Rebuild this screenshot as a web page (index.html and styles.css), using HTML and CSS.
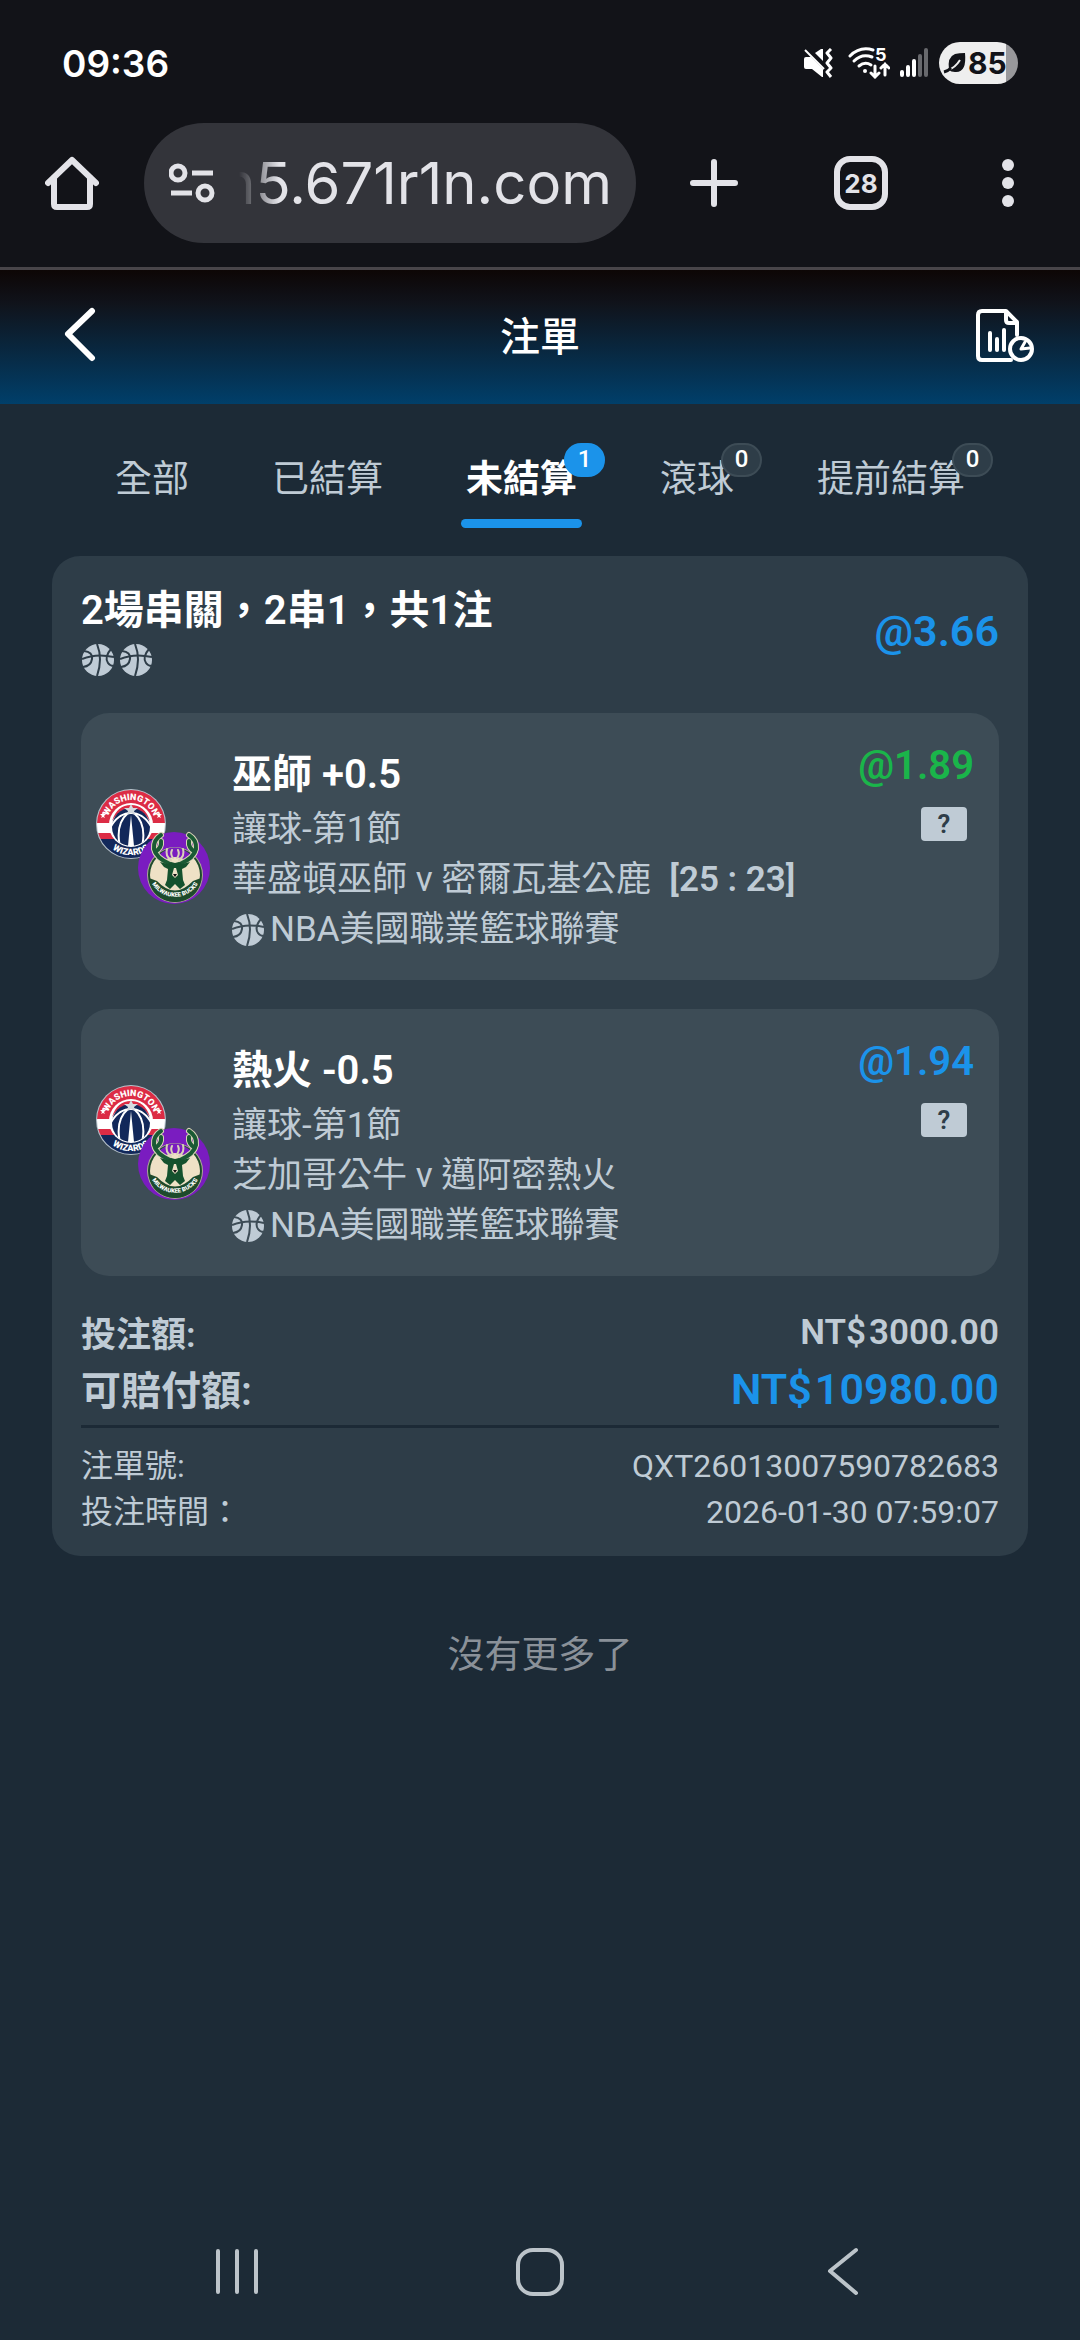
FILE: index.html
```html
<!DOCTYPE html>
<html lang="zh-Hant">
<head>
  <meta charset="UTF-8">
  <meta name="viewport" content="width=device-width, initial-scale=1.0">
  <title>注單</title>
  <link rel="stylesheet" href="styles.css">
</head>
<body>
  <svg class="sprite" width="0" height="0" aria-hidden="true">
    <defs>
      <mask id="ball-seams">
        <circle cx="16" cy="16" r="16" fill="#fff"/>
        <g fill="none" stroke="#000" stroke-width="2">
          <path d="M15 0Q21 15 15 32"/>
          <path d="M0 15Q14 9 32 13"/>
          <path d="M2 7Q11 8 10 15Q9 22 1 23"/>
          <path d="M29 5Q22 13 26 19Q28 22 32 22"/>
        </g>
      </mask>
      <clipPath id="wiz-clip"><circle cx="35" cy="36" r="34"/></clipPath>
      <clipPath id="wiz-ball"><circle cx="35" cy="38" r="20"/></clipPath>
      <path id="wiz-top" d="M11 36A24 24 0 0 1 59 36"/>
      <path id="wiz-bottom" d="M5 44A31 31 0 0 0 65 44"/>
      <path id="bucks-bottom" d="M54 92A27 27 0 0 0 104 92"/>
    </defs>
    <symbol id="ball" viewBox="0 0 32 32">
      <rect width="32" height="32" fill="currentColor" mask="url(#ball-seams)"/>
    </symbol>
    <symbol id="wizards" viewBox="0 0 116 116">
      <circle cx="35" cy="36" r="35" fill="#b9c3cc"/>
      <g clip-path="url(#wiz-clip)">
        <rect width="72" height="36" fill="#dc2c45"/>
        <rect y="35" width="72" height="10" fill="#fff"/>
        <rect y="45" width="72" height="6" fill="#dc2c45"/>
        <rect y="51" width="72" height="22" fill="#12285a"/>
      </g>
      <circle cx="35" cy="37" r="22" fill="#fff"/>
      <path d="M16 33Q21 17 35 17Q49 17 54 33Q47 21 35 21Q23 21 16 33Z" fill="#dc2c45"/>
      <circle cx="35" cy="39" r="19" fill="#12285a"/>
      <g fill="none" stroke="#fff" stroke-width="2" clip-path="url(#wiz-ball)">
        <path d="M14 40Q22 25 35 25Q48 25 56 40"/>
        <path d="M32 25Q19 36 24 59"/>
        <path d="M38 25Q51 36 46 59"/>
      </g>
      <path d="M35 27L38 58H32Z" fill="#fff"/>
      <path d="M35 16L37 20L42 20L38 23L39 27L35 25L31 27L32 23L28 20L33 20Z" fill="#d5dbe0"/>
      <path d="M7 24l1 2h2l-2 2 1 2-2-1-2 1 1-2-2-2h2zM63 24l1 2h2l-2 2 1 2-2-1-2 1 1-2-2-2h2z" fill="#fff"/>
    </symbol>
    <symbol id="bucks" viewBox="0 0 116 116">
      <circle cx="78" cy="80" r="36" fill="#7a1cc0"/>
      <circle cx="79" cy="87" r="28" fill="#a9a893"/>
      <circle cx="79" cy="87" r="27" fill="#1d4a2c"/>
      <circle cx="79" cy="87" r="25" fill="#eee1c6"/>
      <path d="M61 69Q79 50 97 69L90 72Q79 66 68 72Z" fill="#7a1cc0"/>
      <path d="M53 90L61 93Q79 112 97 93L105 90Q103 112 79 114Q55 112 53 90Z" fill="#1d4a2c"/>
      <g fill="none" stroke-linecap="round" stroke-linejoin="round">
        <g stroke="#d9d3b8" stroke-width="6">
          <path d="M74 76Q60 70 58 61Q57 52 65 47M59 64Q66 60 65 53"/>
          <path d="M84 76Q98 70 100 61Q101 52 93 47M99 64Q92 60 93 53"/>
        </g>
        <g stroke="#1a5a34" stroke-width="4">
          <path d="M74 76Q60 70 58 61Q57 52 65 47M59 64Q66 60 65 53"/>
          <path d="M84 76Q98 70 100 61Q101 52 93 47M99 64Q92 60 93 53"/>
        </g>
        <path d="M75 72Q69 68 71 61M83 72Q89 68 87 61M77 70Q74 66 76 62M81 70Q84 66 82 62" stroke="#d9d3b8" stroke-width="2"/>
      </g>
      <path d="M75 74L79 75L83 74L86 76L94 74L90 79L86 81L87 92L89 97L84 101L79 96L74 101L69 97L71 92L72 81L68 79L64 74L72 76Z" fill="#14512d"/>
      <path d="M78 80H80L82 87L79 90L76 87Z" fill="#eee1c6"/>
      <path d="M77 86H81L79 89Z" fill="#111"/>
    </symbol>
  </svg>

  <div class="status-bar">
    <time class="clock">09:36</time>
    <div class="status-icons">
      <svg width="30" height="30" viewBox="0 0 30 30">
        <path d="M1 11Q1 9 3 9H8L20 21V29H19L9 21H3Q1 21 1 19Z" fill="#fff"/>
        <path d="M12 5L18 1H20V13Z" fill="#fff"/>
        <path d="M2 2L21 21" stroke="#fff" stroke-width="2"/>
        <path d="M28 1L24 5L28 10L24 15L28 20L24 24L28 29" fill="none" stroke="#fff" stroke-width="3" stroke-linejoin="round"/>
      </svg>
      <svg class="wifi" width="42" height="32" viewBox="0 0 42 32">
        <g fill="none" stroke="#fff" stroke-width="3" stroke-linecap="round">
          <path d="M2 9Q12 -1 25 3"/>
          <path d="M6 14Q14 6 24 10"/>
          <path d="M11 19Q17 14 23 18"/>
          <path d="M27 19V30M23 26L27 30L31 26M37 28V17M33 21L37 17L41 21"/>
        </g>
        <circle cx="17" cy="24" r="2" fill="#fff"/>
        <text x="27" y="14" font-size="18">5</text>
      </svg>
      <svg class="signal" width="28" height="30" viewBox="0 0 28 30" stroke-width="4" stroke-linecap="round">
        <path d="M2 24V27M8 19V27M14 13V27" stroke="#fff"/>
        <path d="M20 8V27M26 2V27" stroke="#68696d"/>
      </svg>
      <div class="battery">
        <svg width="24" height="22" viewBox="0 0 24 22">
          <path d="M22 1Q24 21 12 20Q8 20 6 18Q4 5 12 2Q16 1 22 1Z" fill="#121318"/>
          <path d="M5 18Q12 16 17 8" fill="none" stroke="#eee" stroke-width="2"/>
          <path d="M1 20Q5 19 8 16" fill="none" stroke="#121318" stroke-width="3"/>
        </svg>
        <span>85</span>
      </div>
    </div>
  </div>

  <div class="toolbar">
    <button class="tool home" aria-label="Home">
      <svg width="54" height="54" viewBox="0 0 54 54" fill="none" stroke="#e3e3e8" stroke-width="6" stroke-linejoin="round" stroke-linecap="round">
        <path d="M3 27L27 4L51 27"/><path d="M9 22V48Q9 51 12 51H42Q45 51 45 48V22"/>
      </svg>
    </button>
    <div class="address">
      <svg width="46" height="40" viewBox="0 0 46 40" fill="none" stroke="#e3e3e8" stroke-width="5">
        <circle cx="9" cy="10" r="7"/><path d="M23 10H44M2 30H23"/><circle cx="36" cy="30" r="7"/>
      </svg>
      <input class="url" type="text" value="n5.671r1n.com" aria-label="URL">
    </div>
    <button class="tool" aria-label="New tab">
      <svg width="54" height="54" viewBox="0 0 54 54" stroke="#e3e3e8" stroke-width="6" stroke-linecap="round">
        <path d="M27 6V48M6 27H48"/>
      </svg>
    </button>
    <button class="tool tab-count"><span>28</span></button>
    <button class="tool" aria-label="Menu">
      <svg width="54" height="54" viewBox="0 0 54 54" fill="#e3e3e8">
        <circle cx="27" cy="9" r="6"/><circle cx="27" cy="27" r="6"/><circle cx="27" cy="45" r="6"/>
      </svg>
    </button>
  </div>

  <header class="header">
    <button class="icon-btn" aria-label="返回">
      <svg width="60" height="56" viewBox="0 0 60 56" fill="none" stroke="#fff" stroke-width="6" stroke-linecap="round" stroke-linejoin="round">
        <path d="M46 5L22 28L46 52"/>
      </svg>
    </button>
    <h1>注單</h1>
    <button class="icon-btn" aria-label="報表">
      <svg width="60" height="56" viewBox="0 0 60 56" fill="none" stroke="#fff" stroke-width="4" stroke-linecap="round" stroke-linejoin="round">
        <path d="M37 54H8Q4 54 4 50V9Q4 5 8 5H32L43 16V29"/>
        <path d="M32 6V14Q32 17 35 17H42"/>
        <path d="M16 27V44M23 33V44M30 24V44"/>
        <circle cx="47" cy="43" r="11"/>
        <path d="M47 43L51 36M47 43L56 42" stroke-width="3"/>
      </svg>
    </button>
  </header>

  <nav class="tabs">
    <button class="tab">全部</button>
    <button class="tab">已結算</button>
    <button class="tab active">未結算<span class="badge">1</span></button>
    <button class="tab">滾球<span class="badge">0</span></button>
    <button class="tab">提前結算<span class="badge">0</span></button>
  </nav>

  <main>
    <section class="ticket">
      <div class="ticket-head">
        <div>
          <h2>2場串關，2串1，共1注</h2>
          <div class="balls">
            <svg class="ball"><use href="#ball"/></svg>
            <svg class="ball"><use href="#ball"/></svg>
          </div>
        </div>
        <strong class="total-odds">@3.66</strong>
      </div>

      <article class="leg">
        <svg class="teams" viewBox="0 0 116 116">
          <use href="#wizards"/>
          <text><textPath href="#wiz-top" startOffset="50%">WASHINGTON</textPath></text>
          <text><textPath href="#wiz-bottom" startOffset="50%">WIZARDS</textPath></text>
          <use href="#bucks"/>
          <text class="small"><textPath href="#bucks-bottom" startOffset="50%">MILWAUKEE BUCKS</textPath></text>
        </svg>
        <div class="leg-info">
          <h3>巫師 +0.5</h3>
          <p>讓球-第1節</p>
          <p>華盛頓巫師 v 密爾瓦基公鹿<b class="score">[25 : 23]</b></p>
          <p class="league"><svg class="ball"><use href="#ball"/></svg>NBA美國職業籃球聯賽</p>
        </div>
        <div class="leg-side">
          <strong class="odds up">@1.89</strong>
          <button class="help">?</button>
        </div>
      </article>

      <article class="leg">
        <svg class="teams" viewBox="0 0 116 116">
          <use href="#wizards"/>
          <text><textPath href="#wiz-top" startOffset="50%">WASHINGTON</textPath></text>
          <text><textPath href="#wiz-bottom" startOffset="50%">WIZARDS</textPath></text>
          <use href="#bucks"/>
          <text class="small"><textPath href="#bucks-bottom" startOffset="50%">MILWAUKEE BUCKS</textPath></text>
        </svg>
        <div class="leg-info">
          <h3>熱火 -0.5</h3>
          <p>讓球-第1節</p>
          <p>芝加哥公牛 v 邁阿密熱火</p>
          <p class="league"><svg class="ball"><use href="#ball"/></svg>NBA美國職業籃球聯賽</p>
        </div>
        <div class="leg-side">
          <strong class="odds">@1.94</strong>
          <button class="help">?</button>
        </div>
      </article>

      <dl class="amounts">
        <div class="row stake"><dt>投注額:</dt><dd><span>NT$</span>3000.00</dd></div>
        <div class="row payout"><dt>可賠付額:</dt><dd><span>NT$</span>10980.00</dd></div>
      </dl>
      <dl class="meta">
        <div class="row"><dt>注單號:</dt><dd>QXT26013007590782683</dd></div>
        <div class="row"><dt>投注時間：</dt><dd>2026-01-30 07:59:07</dd></div>
      </dl>
    </section>
    <p class="no-more">沒有更多了</p>
  </main>

  <div class="system-nav">
    <button aria-label="Recents">
      <svg width="48" height="50" viewBox="0 0 48 50" stroke="#bcc4ca" stroke-width="4" stroke-linecap="round">
        <path d="M5 4V45M24 4V45M43 4V45"/>
      </svg>
    </button>
    <button aria-label="Home">
      <svg width="50" height="50" viewBox="0 0 50 50" fill="none" stroke="#bcc4ca" stroke-width="4">
        <rect x="3" y="3" width="44" height="44" rx="15"/>
      </svg>
    </button>
    <button aria-label="Back">
      <svg width="48" height="50" viewBox="0 0 48 50" fill="none" stroke="#bcc4ca" stroke-width="4" stroke-linecap="round" stroke-linejoin="round">
        <path d="M37 3L11 24L37 46"/>
      </svg>
    </button>
  </div>
</body>
</html>
```
FILE: styles.css
```css
* {
  box-sizing: border-box;
  margin: 0;
  padding: 0;
}

body {
  display: flex;
  flex-direction: column;
  min-height: 100vh;
  background-color: #1c2a36;
  color: #bfcbd5;
  font-family: Roboto, "Noto Sans CJK TC", sans-serif;
  font-size: 35px;
}

button {
  border: none;
  background: none;
  color: inherit;
  font-family: inherit;
  cursor: pointer;
}

svg {
  display: block;
  flex: none;
}

.sprite {
  position: absolute;
}

/* phone status bar */
.status-bar {
  display: flex;
  justify-content: space-between;
  align-items: center;
  height: 123px;
  padding: 3px 62px 0;
  background-color: #121318;
  color: #fff;
  font-family: Inter, sans-serif;
}

.clock {
  font-size: 37px;
  font-weight: 600;
}

.status-icons {
  display: flex;
  align-items: center;
}

.wifi {
  margin-left: 15px;
  fill: #fff;
  font-weight: 700;
}

.signal {
  margin-left: 10px;
}

.battery {
  display: flex;
  align-items: center;
  width: 79px;
  height: 42px;
  margin-left: 11px;
  padding-left: 4px;
  border-radius: 21px;
  background: linear-gradient(to right, #eee 67px, #98989b 67px);
  color: #121318;
  font-size: 30px;
  font-weight: 700;
}

.battery span {
  margin-left: 1px;
}

/* browser toolbar */
.toolbar {
  display: flex;
  align-items: center;
  height: 147px;
  padding: 0 45px 24px;
  border-bottom: 3px solid #484549;
  background-color: #121318;
}

.tool {
  width: 54px;
  height: 54px;
  margin-left: 51px;
  flex: none;
}

.home {
  margin-left: 0;
}

.address {
  display: flex;
  flex: 1;
  align-items: center;
  min-width: 0;
  height: 120px;
  margin-left: 45px;
  padding: 0 24px 0 25px;
  border-radius: 60px;
  background-color: #33343a;
}

.url {
  flex: 1;
  min-width: 0;
  height: 100px;
  margin-left: 24px;
  border: none;
  outline: none;
  background: none;
  color: #e3e3e8;
  direction: rtl;
  font-family: Inter, sans-serif;
  font-size: 58px;
  -webkit-mask-image: linear-gradient(to right, transparent, #000 40px);
  mask-image: linear-gradient(to right, transparent, #000 40px);
}

.tool + .tool {
  margin-left: 93px;
}

.tab-count {
  border: 6px solid #e3e3e8;
  border-radius: 16px;
  color: #e3e3e8;
  font-family: Inter, sans-serif;
  font-size: 26px;
  font-weight: 700;
}

/* page header */
.header {
  display: flex;
  justify-content: space-between;
  align-items: center;
  height: 134px;
  padding: 0 46px 6px;
  background: linear-gradient(#0d0605, #10131b 25%, #003f6a);
  color: #fff;
}

.header h1 {
  font-size: 40px;
  font-weight: 500;
}

/* tabs */
.tabs {
  display: flex;
  justify-content: center;
  gap: 83px;
  height: 152px;
  padding-top: 48px;
}

.tab {
  position: relative;
  height: 76px;
  padding-bottom: 20px;
  font-size: 37px;
  line-height: 56px;
  white-space: nowrap;
}

.tab.active {
  color: #fff;
  font-weight: 700;
}

.tab.active::after {
  content: "";
  position: absolute;
  right: -5px;
  bottom: 0;
  left: -5px;
  height: 9px;
  border-radius: 5px;
  background-color: #1b93ea;
}

.badge {
  position: absolute;
  top: -9px;
  right: -28px;
  width: 41px;
  height: 34px;
  border: 2px solid #3d4c56;
  border-radius: 17px;
  background-color: #2e3d48;
  color: #fff;
  font-size: 24px;
  font-weight: 500;
  line-height: 29px;
}

.active .badge {
  border-color: #1b93ea;
  background-color: #1b93ea;
}

/* bet slip */
.ticket {
  margin: 0 52px;
  padding: 29px 29px 21px;
  border-radius: 28px;
  background-color: #2e3d48;
}

.ticket-head {
  display: flex;
  justify-content: space-between;
  align-items: center;
  margin-bottom: 37px;
}

.ticket-head h2 {
  color: #fff;
  font-size: 40px;
  font-weight: 600;
  line-height: 52px;
}

.balls {
  display: flex;
  gap: 6px;
  margin-top: 7px;
  padding-left: 1px;
}

.ball {
  width: 32px;
  height: 32px;
}

.total-odds {
  color: #1b93ea;
  font-size: 43px;
  font-weight: 600;
}

.leg {
  display: flex;
  padding: 32px 25px 25px 15px;
  border-radius: 28px;
  background-color: #3d4c56;
}

.leg + .leg {
  margin-top: 29px;
}

.teams {
  width: 116px;
  height: 116px;
  margin-top: 43px;
  fill: #fff;
  font-size: 9px;
  font-weight: 900;
  text-anchor: middle;
}

.teams .small {
  font-size: 6px;
}

.leg-info {
  flex: 1;
  margin-left: 20px;
}

.leg-info h3 {
  color: #fff;
  font-size: 40px;
  font-weight: 600;
  line-height: 60px;
}

.leg-info p {
  line-height: 50px;
  height: 50px;
}

.score {
  margin-left: 18px;
  font-weight: 600;
}

.league {
  display: flex;
  align-items: center;
  gap: 6px;
}

.leg-side {
  display: flex;
  flex-direction: column;
  align-items: flex-end;
}

.odds {
  color: #1b93ea;
  font-size: 40px;
  font-weight: 600;
  line-height: 42px;
}

.up {
  color: #1ab54a;
}

.help {
  width: 46px;
  height: 34px;
  margin: 20px 7px 0 0;
  border-radius: 4px;
  background-color: #bfcbd5;
  color: #2e3d48;
  font-size: 26px;
  font-weight: 600;
}

.row {
  display: flex;
  justify-content: space-between;
}

.amounts {
  margin-top: 33px;
  padding-bottom: 4px;
  border-bottom: 3px solid #1c2a36;
  font-weight: 600;
}

.amounts dd span {
  margin-right: 3px;
}

.stake dt {
  line-height: 54px;
}

.stake dd {
  line-height: 48px;
}

.payout dt {
  font-size: 40px;
  line-height: 58px;
}

.payout dd {
  color: #1b93ea;
  font-size: 43px;
  line-height: 52px;
}

.meta {
  padding-top: 15px;
  font-size: 32px;
  line-height: 46px;
}

.no-more {
  margin-top: 73px;
  color: #8a9199;
  font-size: 37px;
  line-height: 54px;
  text-align: center;
}

/* android navigation */
.system-nav {
  display: flex;
  justify-content: space-around;
  align-items: center;
  height: 136px;
  margin-top: auto;
  padding: 0 86px;
}
```
